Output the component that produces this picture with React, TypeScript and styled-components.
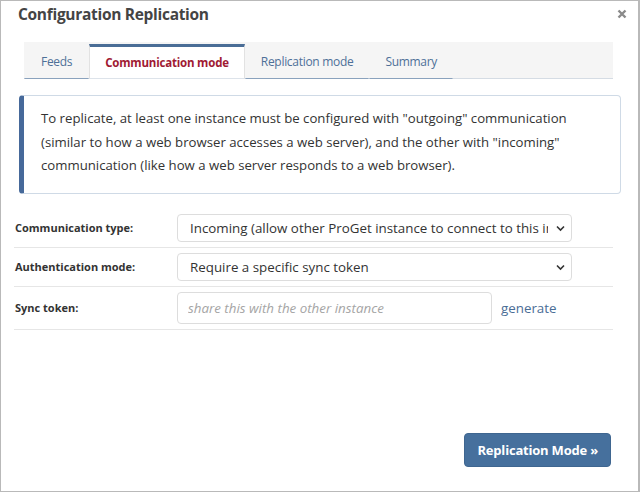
import React from "react";
import styled, { createGlobalStyle } from "styled-components";

const GlobalStyle = createGlobalStyle`
  html, body { margin: 0; padding: 0; background: #fff; }
  body { font-family: "Open Sans", "Noto Sans", sans-serif; color: #333; }
  * { box-sizing: border-box; }
`;

const Frame = styled.div`
  width: 640px;
  height: 492px;
  border: 1px solid #b9b9b9;
  border-right-width: 2px;
  display: flex;
  flex-direction: column;
  background: #fff;
`;

const Header = styled.div`
  display: flex;
  align-items: center;
  justify-content: space-between;
  padding: 0 9px 0 17px;
  height: 26px;
`;

const Title = styled.h1`
  margin: 0;
  font-size: 15.5px;
  font-weight: 700;
  color: #444;
  letter-spacing: -0.3px;
`;

const Close = styled.button`
  border: 0;
  background: none;
  padding: 0;
  width: 14px;
  height: 14px;
  display: flex;
  align-items: center;
  justify-content: center;
  cursor: pointer;
`;

const Body = styled.div`
  flex: 1;
  display: flex;
  flex-direction: column;
  padding: 15px 25px 24px 13px;
`;

const TabBar = styled.div`
  display: flex;
  margin-left: 10px;
  height: 37px;
  background: #f5f5f5;
  border-bottom: 1px solid #d5dce4;
  padding-top: 2px;
`;

const Tab = styled.div<{ $active?: boolean }>`
  display: flex;
  align-items: center;
  padding: 0 15px;
  margin-bottom: -1px;
  font-size: ${(p) => (p.$active ? "11.5px" : "12px")};
  letter-spacing: ${(p) => (p.$active ? "-0.2px" : "-0.3px")};
  color: ${(p) => (p.$active ? "#a01a33" : "#4e7098")};
  font-weight: ${(p) => (p.$active ? 700 : 400)};
  background: ${(p) => (p.$active ? "#fff" : "transparent")};
  border-top: 3px solid ${(p) => (p.$active ? "#4a6d96" : "transparent")};
  border-left: 1px solid ${(p) => (p.$active ? "#e2e2e2" : "transparent")};
  border-right: 1px solid ${(p) => (p.$active ? "#e2e2e2" : "transparent")};
  border-bottom: 1px solid ${(p) => (p.$active ? "#dde3ea" : "#8aa2bd")};
  padding-bottom: ${(p) => (p.$active ? "1px" : "2px")};
  &:first-child {
    padding-left: 16px;
    padding-right: 16px;
  }
`;

const Info = styled.div`
  margin: 16px -8px 0 5px;
  border: 1px solid #cfdae6;
  border-left: 5px solid #46699a;
  border-radius: 4px;
  padding: 11px 18px 15px 17px;
  font-size: 13.2px;
  line-height: 23.5px;
  color: #333;
`;

const Form = styled.div`
  margin-top: 15px;
  display: flex;
  flex-direction: column;
`;

const Row = styled.div`
  display: flex;
  align-items: center;
  padding: 5px 0 5px 1px;
  border-bottom: 1px solid #e6e6e6;
`;

const Label = styled.label`
  width: 162px;
  font-size: 11px;
  font-weight: 700;
  color: #333;
`;

const SelectWrap = styled.div`
  position: relative;
  width: 395px;
`;

const Select = styled.select`
  appearance: none;
  -webkit-appearance: none;
  width: 100%;
  height: 28px;
  border: 1px solid #ddd;
  border-radius: 4px;
  background: #fff;
  padding: 0 23px 0 12px;
  font-family: inherit;
  font-size: 13.35px;
  color: #333;
`;

const Chevron = styled.svg`
  position: absolute;
  right: 7px;
  top: 11px;
  pointer-events: none;
`;

const Input = styled.input`
  width: 315px;
  height: 32px;
  border: 1px solid #ddd;
  border-radius: 4px;
  padding: 0 10px;
  font-family: inherit;
  font-size: 13.35px;
  color: #333;
  &::placeholder {
    color: #a5a5a5;
    font-style: italic;
  }
`;

const LinkButton = styled.a`
  margin-left: 9px;
  font-size: 13.35px;
  color: #4a6d96;
  text-decoration: none;
  cursor: pointer;
`;

const Footer = styled.div`
  margin-top: auto;
  display: flex;
  justify-content: flex-end;
  padding-right: 2px;
`;

const PrimaryButton = styled.button`
  height: 34px;
  padding: 0 12px;
  background: #46709d;
  border: 1px solid #3f6690;
  border-radius: 4px;
  color: #fff;
  font-family: inherit;
  font-size: 13px;
  letter-spacing: -0.2px;
  font-weight: 700;
  cursor: pointer;
`;

const ChevronIcon = () => (
  <Chevron width="9" height="7" viewBox="0 0 9 7">
    <path d="M1 1.5 L4.5 5 L8 1.5" fill="none" stroke="#333" strokeWidth="1.6" />
  </Chevron>
);

export default function App() {
  return (
    <>
      <GlobalStyle />
      <Frame>
        <Header>
          <Title>Configuration Replication</Title>
          <Close aria-label="Close">
            <svg width="10" height="10" viewBox="0 0 10 10">
              <path d="M1.5 1.5 L8.5 8.5 M8.5 1.5 L1.5 8.5" stroke="#8a8a8a" strokeWidth="2.4" />
            </svg>
          </Close>
        </Header>
        <Body>
          <TabBar>
            <Tab>Feeds</Tab>
            <Tab $active>Communication mode</Tab>
            <Tab>Replication mode</Tab>
            <Tab>Summary</Tab>
          </TabBar>
          <Info>
            To replicate, at least one instance must be configured with "outgoing" communication
            (similar to how a web browser accesses a web server), and the other with "incoming"
            communication (like how a web server responds to a web browser).
          </Info>
          <Form>
            <Row>
              <Label>Communication type:</Label>
              <SelectWrap>
                <Select defaultValue="in">
                  <option value="in">Incoming (allow other ProGet instance to connect to this instance)</option>
                  <option value="out">Outgoing (connect to another ProGet instance)</option>
                </Select>
                <ChevronIcon />
              </SelectWrap>
            </Row>
            <Row>
              <Label>Authentication mode:</Label>
              <SelectWrap>
                <Select defaultValue="token">
                  <option value="token">Require a specific sync token</option>
                  <option value="any">Allow any</option>
                </Select>
                <ChevronIcon />
              </SelectWrap>
            </Row>
            <Row>
              <Label>Sync token:</Label>
              <Input placeholder="share this with the other instance" />
              <LinkButton>generate</LinkButton>
            </Row>
          </Form>
          <Footer>
            <PrimaryButton>Replication Mode »</PrimaryButton>
          </Footer>
        </Body>
      </Frame>
    </>
  );
}
